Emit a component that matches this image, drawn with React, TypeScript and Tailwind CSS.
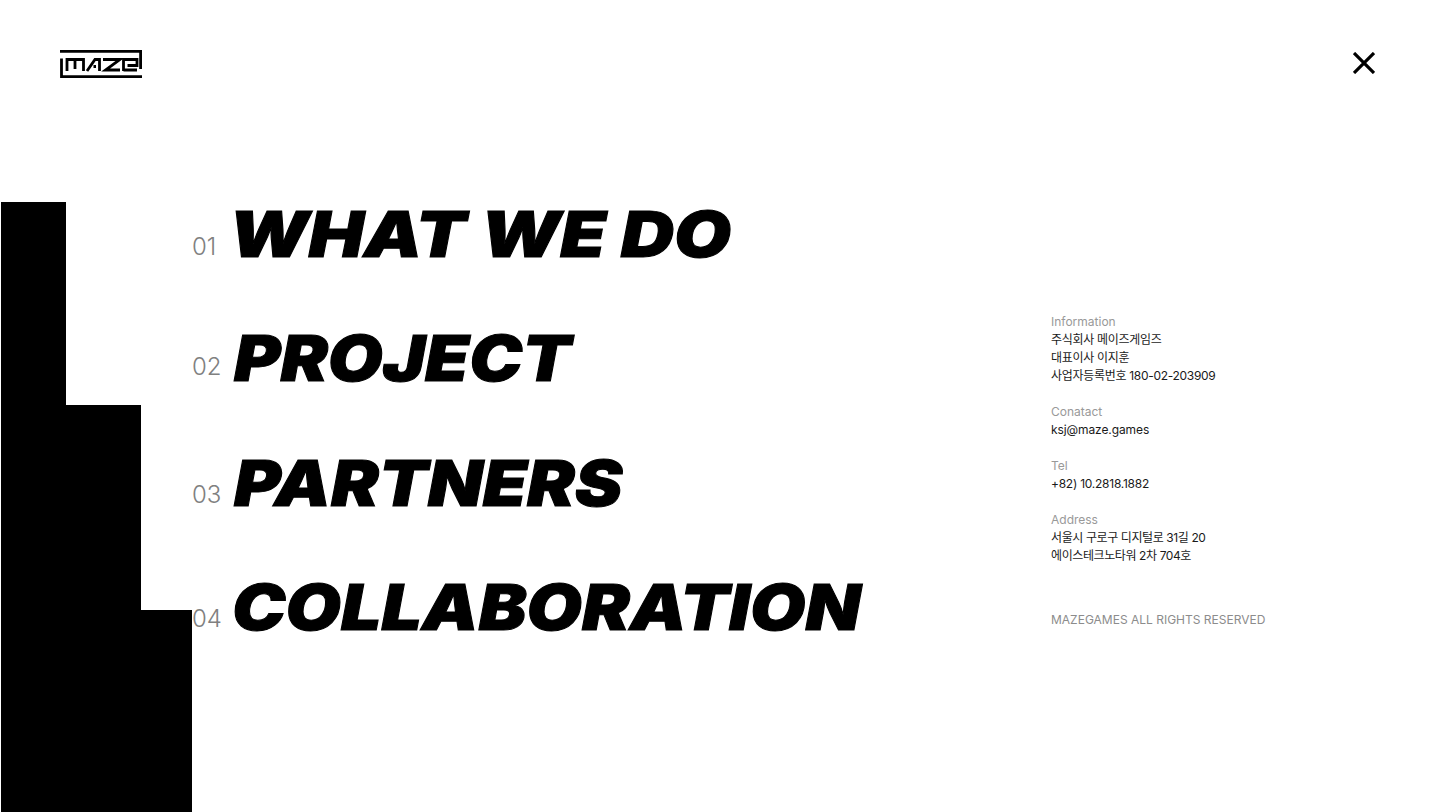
import React from 'react';

const menu = [
  { no: '01', title: 'WHAT WE DO', rowClass: 'h-[124px]', noClass: 'w-[37px] mt-[26px]', titleClass: 'scale-x-[1.168]' },
  { no: '02', title: 'PROJECT', rowClass: 'h-[125px]', noClass: 'w-[42px] mt-[22px]', titleClass: 'scale-x-[1.125]' },
  { no: '03', title: 'PARTNERS', rowClass: 'h-[124px]', noClass: 'w-[42px] mt-[25px]', titleClass: 'scale-x-[1.133]' },
  { no: '04', title: 'COLLABORATION', rowClass: 'h-[124px]', noClass: 'w-[40px] mt-[25px]', titleClass: 'scale-x-[1.135]' },
];

const info = [
  { label: 'Information', lines: ['주식회사 메이즈게임즈', '대표이사 이지훈', '사업자등록번호 180-02-203909'], lineClass: 'tracking-[-0.3px]' },
  { label: 'Conatact', lines: ['ksj@maze.games'], lineClass: 'tracking-[-0.1px]' },
  { label: 'Tel', lines: ['+82) 10.2818.1882'], lineClass: 'tracking-[-0.25px]' },
  { label: 'Address', lines: ['서울시 구로구 디지털로 31길 20', '에이스테크노타워 2차 704호'], lineClass: 'tracking-[-0.4px]' },
];

const Logo = () => (
  <svg width="82" height="28" viewBox="0 0 82 28" fill="none" stroke="black" strokeWidth="2.8">
    <path d="M0 1.4H80.6V19" />
    <path d="M1.5 8.5V26.6H82" />
    <path d="M7 21V9.5H23.5V21M15 9.5V19" />
    <path d="M27 21L35 9.5H39.5V21M33.5 16.5H36" />
    <path d="M43 9.5H60L45.5 20H60" />
    <path d="M63.5 21V9.5H77V15.5H67.5M63.5 20H77" />
  </svg>
);

export default function App() {
  return (
    <div className="w-[1437px] h-[812px] bg-white flex flex-col overflow-hidden font-['Inter','Noto_Sans_CJK_KR',sans-serif]">
      <header className="h-[202px] flex items-start justify-between pl-[60px] pr-[62px] pt-[50px] shrink-0">
        <Logo />
        <svg width="22" height="22" viewBox="0 0 22 22" className="mt-[2px]" stroke="black" strokeWidth="3.2" fill="none">
          <path d="M1 1L21 21M21 1L1 21" />
        </svg>
      </header>

      <div className="flex-1 flex">
        <div className="flex items-stretch pl-[1px] w-[192px] shrink-0">
          <div className="w-[65px] bg-black" />
          <div className="w-[75px] bg-black mt-[203px]" />
          <div className="w-[51px] bg-black mt-[408px]" />
        </div>

        <nav className="w-[859px] shrink-0 pt-[7px]">
          {menu.map((item) => (
            <div key={item.no} className={`flex items-start ${item.rowClass}`}>
              <span className={`text-[24px] leading-none font-light text-[#808080] ${item.noClass}`}>{item.no}</span>
              <span className={`text-[63px] leading-[50px] font-black italic text-black whitespace-nowrap origin-left [-webkit-text-stroke:1px_black] ${item.titleClass}`}>
                {item.title}
              </span>
            </div>
          ))}
        </nav>

        <aside className="pt-[111px] text-[12px] leading-[18px] text-[#1a1a1a]">
          {info.map((block) => (
            <div key={block.label} className="mb-[18px]">
              <div className="text-[#999999]">{block.label}</div>
              {block.lines.map((line) => (
                <div key={line} className={block.lineClass}>{line}</div>
              ))}
            </div>
          ))}
          <div className="mt-[46px] text-[#8c8c8c]">MAZEGAMES ALL RIGHTS RESERVED</div>
        </aside>
      </div>
    </div>
  );
}
